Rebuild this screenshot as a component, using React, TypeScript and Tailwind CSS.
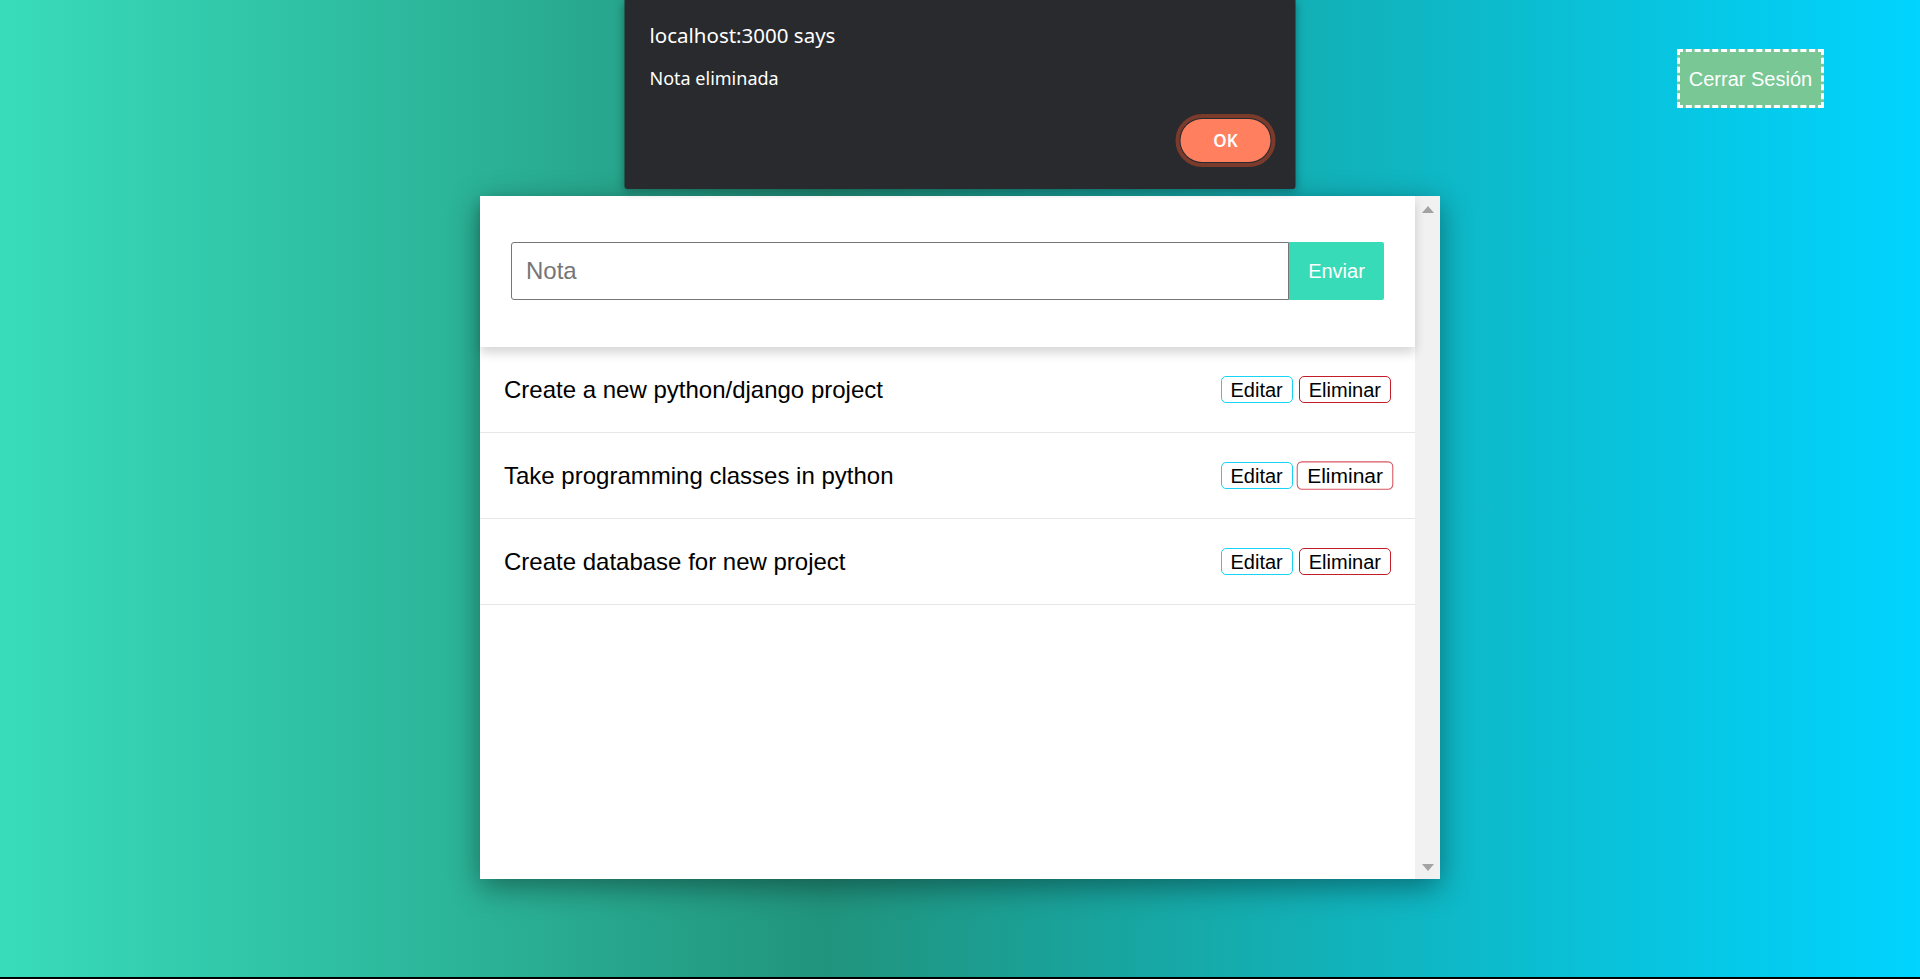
import React, { useState } from "react";

interface Nota {
    id: number;
    texto: string;
}

const notasIniciales: Nota[] = [
    { id: 1, texto: "Create a new python/django project" },
    { id: 2, texto: "Take programming classes in python" },
    { id: 3, texto: "Create database for new project" },
];

// alert() del navegador, dibujado como overlay
const Alerta: React.FC<{ mensaje: string; onOk: () => void }> = ({ mensaje, onOk }) => (
    <div
        className="absolute top-0 left-1/2 -translate-x-1/2 w-[671px] h-[189px] bg-[#292a2d] rounded-b-[3px] shadow-[0_2px_10px_rgba(0,0,0,0.35)] px-[25px] flex flex-col text-white z-20"
        style={{ fontFamily: '"Noto Sans", "Open Sans", sans-serif' }}
    >
        <p className="pt-[21px] text-[20.5px] leading-[28px]">localhost:3000 says</p>
        <p className="mt-[17px] text-[18px] leading-[24px]">{mensaje}</p>
        <div className="flex justify-end mt-[29px]">
            <button
                onClick={onOk}
                className="w-[90px] h-[43px] rounded-full bg-[#ff7f5f] text-white text-[17px] font-semibold outline-4 outline-offset-1 outline-[#7a3a2c]"
            >
                OK
            </button>
        </div>
    </div>
);

const FilaNota: React.FC<{ nota: Nota; resaltado?: boolean }> = ({ nota, resaltado }) => (
    <div className="h-[86px] border-b border-[#e6e7eb] px-6 flex items-center justify-between">
        <span className="text-[24px] text-black">{nota.texto}</span>
        <div className="flex items-center gap-[6px]">
            <button className="h-[27px] px-[9px] flex items-center border border-[#17d4f5] rounded-[5px] text-[20px] text-black bg-white">
                Editar
            </button>
            <button
                className={
                    resaltado
                        ? "h-[27px] px-[9px] flex items-center border border-[#d9545f] rounded-[5px] text-[20px] text-black bg-white scale-[1.05]"
                        : "h-[27px] px-[9px] flex items-center border border-[#c41d2a] rounded-[5px] text-[20px] text-black bg-white"
                }
            >
                Eliminar
            </button>
        </div>
    </div>
);

const App: React.FC = () => {
    const [notas] = useState<Nota[]>(notasIniciales);
    const [alerta, setAlerta] = useState(true);
    const [texto, setTexto] = useState("");

    return (
        <div className="h-[979px] overflow-hidden flex flex-col" style={{ fontFamily: '"Liberation Sans", Arial, sans-serif' }}>
            <div className="relative h-[977px] bg-[linear-gradient(to_right,#38dcbb_0%,#21947d_43%,#00d4ff_100%)] flex flex-col">
                {alerta && <Alerta mensaje="Nota eliminada" onOk={() => setAlerta(false)} />}

                <div className="flex justify-end pt-[49px] pr-[96px]">
                    <button className="w-[147px] h-[59px] bg-[#79c794] border-[3px] border-dashed border-white text-white text-[20px] flex items-center justify-center">
                        Cerrar Sesión
                    </button>
                </div>

                <div className="mt-[88px] mx-auto w-[960px] h-[683px] bg-white flex shadow-[0_8px_28px_rgba(0,0,0,0.4)]">
                    <div className="flex-1 flex flex-col">
                        <div className="relative z-10 bg-white px-[31px] pt-[46px] pb-[47px] flex shadow-[0_6px_10px_rgba(0,0,0,0.16)]">
                            <input
                                value={texto}
                                onChange={(e) => setTexto(e.target.value)}
                                placeholder="Nota"
                                className="flex-1 h-[58px] border border-[#767676] rounded-l-[3px] px-[14px] text-[24px] text-black placeholder:text-[#757575] outline-none"
                            />
                            <button className="w-[95px] h-[58px] bg-[#37dbb7] text-white text-[20px] rounded-r-[2px]">
                                Enviar
                            </button>
                        </div>
                        {notas.map((nota) => (
                            <FilaNota key={nota.id} nota={nota} resaltado={nota.id === 2} />
                        ))}
                    </div>
                    {/* barra de scroll */}
                    <div className="w-[25px] bg-[#f1f1f1] flex flex-col items-center justify-between py-[6px]">
                        <svg width="12" height="7" viewBox="0 0 12 7" className="mt-[4px]">
                            <path d="M0 7 L6 0 L12 7 Z" fill="#a3a3a3" />
                        </svg>
                        <svg width="12" height="7" viewBox="0 0 12 7" className="mb-[2px]">
                            <path d="M0 0 L12 0 L6 7 Z" fill="#a3a3a3" />
                        </svg>
                    </div>
                </div>
            </div>
            <div className="h-[2px] bg-black" />
        </div>
    );
};

export default App;
